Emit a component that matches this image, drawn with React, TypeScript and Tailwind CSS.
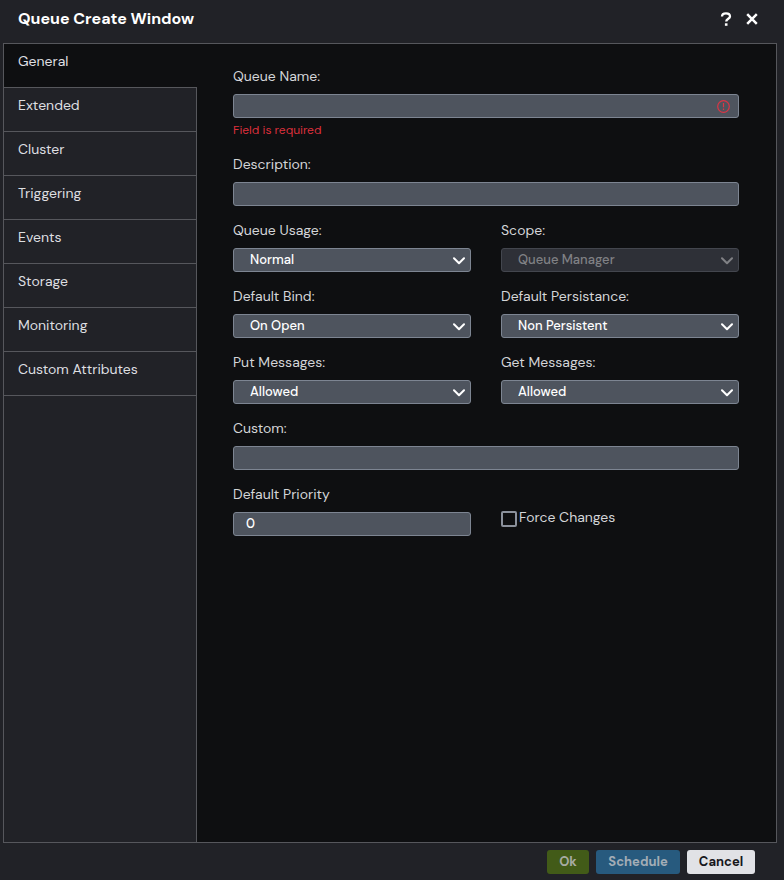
import { useState } from 'react'

const tabs = [
  'General',
  'Extended',
  'Cluster',
  'Triggering',
  'Events',
  'Storage',
  'Monitoring',
  'Custom Attributes',
]

const labelClass = 'text-sm leading-5 text-[#d4d5d8]'
const controlClass =
  'block h-6 w-full rounded-[3px] border border-[#7d8592] bg-[#4e545e] text-[13px] font-medium text-white outline-none'

function TextField({ id, label, value = '', error }: { id: string; label: string; value?: string; error?: string }) {
  return (
    <div>
      <label htmlFor={id} className={`mb-2 block ${labelClass}`}>{label}</label>
      <div className="relative">
        <input id={id} type="text" defaultValue={value} className={`${controlClass} px-3 pb-0.5`} />
        {error && (
          <svg viewBox="0 0 13 13" className="absolute top-1.5 right-[9px] size-[13px]" fill="none" stroke="#dc3545">
            <circle cx="6.5" cy="6.5" r="5.8" strokeWidth="1.2" />
            <path d="M6.5 3v4.2M6.5 8.6v1.3" strokeWidth="1.2" />
          </svg>
        )}
      </div>
      {error && <p className="pt-0.5 text-xs leading-5 text-[#dc2f3c]">{error}</p>}
    </div>
  )
}

function SelectField({ id, label, value, disabled }: { id: string; label: string; value: string; disabled?: boolean }) {
  return (
    <div>
      <label htmlFor={id} className={`mb-2 block ${labelClass}`}>{label}</label>
      <div className="relative">
        <select
          id={id}
          disabled={disabled}
          className={`${controlClass} appearance-none pr-8 pl-4 disabled:border-[#43464e] disabled:bg-[#2e3037] disabled:text-[#808185] disabled:opacity-100`}
        >
          <option>{value}</option>
        </select>
        <svg
          viewBox="0 0 14 8"
          className={`pointer-events-none absolute top-[9px] right-[5px] h-2 w-3.5 ${disabled ? 'text-[#808185]' : 'text-white'}`}
          fill="none"
          stroke="currentColor"
          strokeWidth="2"
          strokeLinecap="round"
          strokeLinejoin="round"
        >
          <path d="M2 1.2l5 5 5-5" />
        </svg>
      </div>
    </div>
  )
}

export default function App() {
  const [active, setActive] = useState('General')

  return (
    <div className="flex min-h-screen flex-col bg-[#212227] font-['DM_Sans','Inter',sans-serif]">
      <header className="flex h-[43px] items-start justify-between pt-[9px] pr-[25px] pl-[18px] text-white">
        <h1 className="text-base leading-5 font-bold">Queue Create Window</h1>
        <div className="flex gap-[13px]">
          <button type="button" aria-label="Help" className="flex h-5 w-3 items-center justify-center">
            <svg viewBox="0 0 12 14" className="h-3.5 w-3" fill="none" stroke="currentColor" strokeWidth="2.3">
              <path d="M2 4.6C2 2.5 3.6 1.3 6 1.3s4 1.2 4 3.1c0 2.3-3.8 2.4-3.8 5.2" />
              <path d="M6.2 11.3v2.5" strokeWidth="2.6" />
            </svg>
          </button>
          <button type="button" aria-label="Close" className="flex h-5 w-3.5 items-center justify-center">
            <svg viewBox="0 0 12 12" className="size-3" fill="none" stroke="currentColor" strokeWidth="2.5">
              <path d="M1.2 1.2l9.6 9.6M10.8 1.2l-9.6 9.6" />
            </svg>
          </button>
        </div>
      </header>

      <main className="mr-[7px] ml-[3px] flex flex-1 border border-[#56575c] bg-[#0e0f11]">
        <nav className="flex w-[193px] flex-col">
          {tabs.map((tab) => (
            <button
              key={tab}
              type="button"
              onClick={() => setActive(tab)}
              className={`h-11 border-b border-[#56575c] px-3.5 pb-2.5 text-left text-sm text-[#dedfe1] ${
                tab === active ? 'bg-[#0e0f11]' : 'border-r bg-[#212227]'
              }`}
            >
              {tab}
            </button>
          ))}
          <div className="flex-1 border-r border-[#56575c] bg-[#212227]" />
        </nav>

        <form className="flex flex-1 flex-col gap-3.5 pt-[22px] pr-[37px] pl-9">
          <TextField id="name" label="Queue Name:" error="Field is required" />
          <TextField id="description" label="Description:" />
          <div className="grid grid-cols-2 gap-x-[30px] gap-y-3.5">
            <SelectField id="usage" label="Queue Usage:" value="Normal" />
            <SelectField id="scope" label="Scope:" value="Queue Manager" disabled />
            <SelectField id="bind" label="Default Bind:" value="On Open" />
            <SelectField id="persistence" label="Default Persistance:" value="Non Persistent" />
            <SelectField id="put" label="Put Messages:" value="Allowed" />
            <SelectField id="get" label="Get Messages:" value="Allowed" />
          </div>
          <TextField id="custom" label="Custom:" />
          <div className="grid grid-cols-2 gap-x-[30px]">
            <TextField id="priority" label="Default Priority" value="0" />
            <div className="flex items-end gap-0.5 self-end pb-[9px]">
              <input
                id="force"
                type="checkbox"
                className="size-4 appearance-none rounded-[2px] border-2 border-[#8b919c] checked:bg-[#8b919c]"
              />
              <label htmlFor="force" className={labelClass}>Force Changes</label>
            </div>
          </div>
        </form>
      </main>

      <footer className="flex justify-end gap-[7px] pt-[7px] pr-[29px] pb-1.5 text-[13px] font-bold">
        <button type="button" className="h-6 w-[42px] rounded-[3px] bg-[#425b18] text-[#a8aca3]">Ok</button>
        <button type="button" className="h-6 w-[84px] rounded-[3px] bg-[#275a7e] text-[#a3adb6]">Schedule</button>
        <button type="button" className="h-6 w-[68px] rounded-[3px] bg-[#e1e2e6] text-[#17181c]">Cancel</button>
      </footer>
    </div>
  )
}
